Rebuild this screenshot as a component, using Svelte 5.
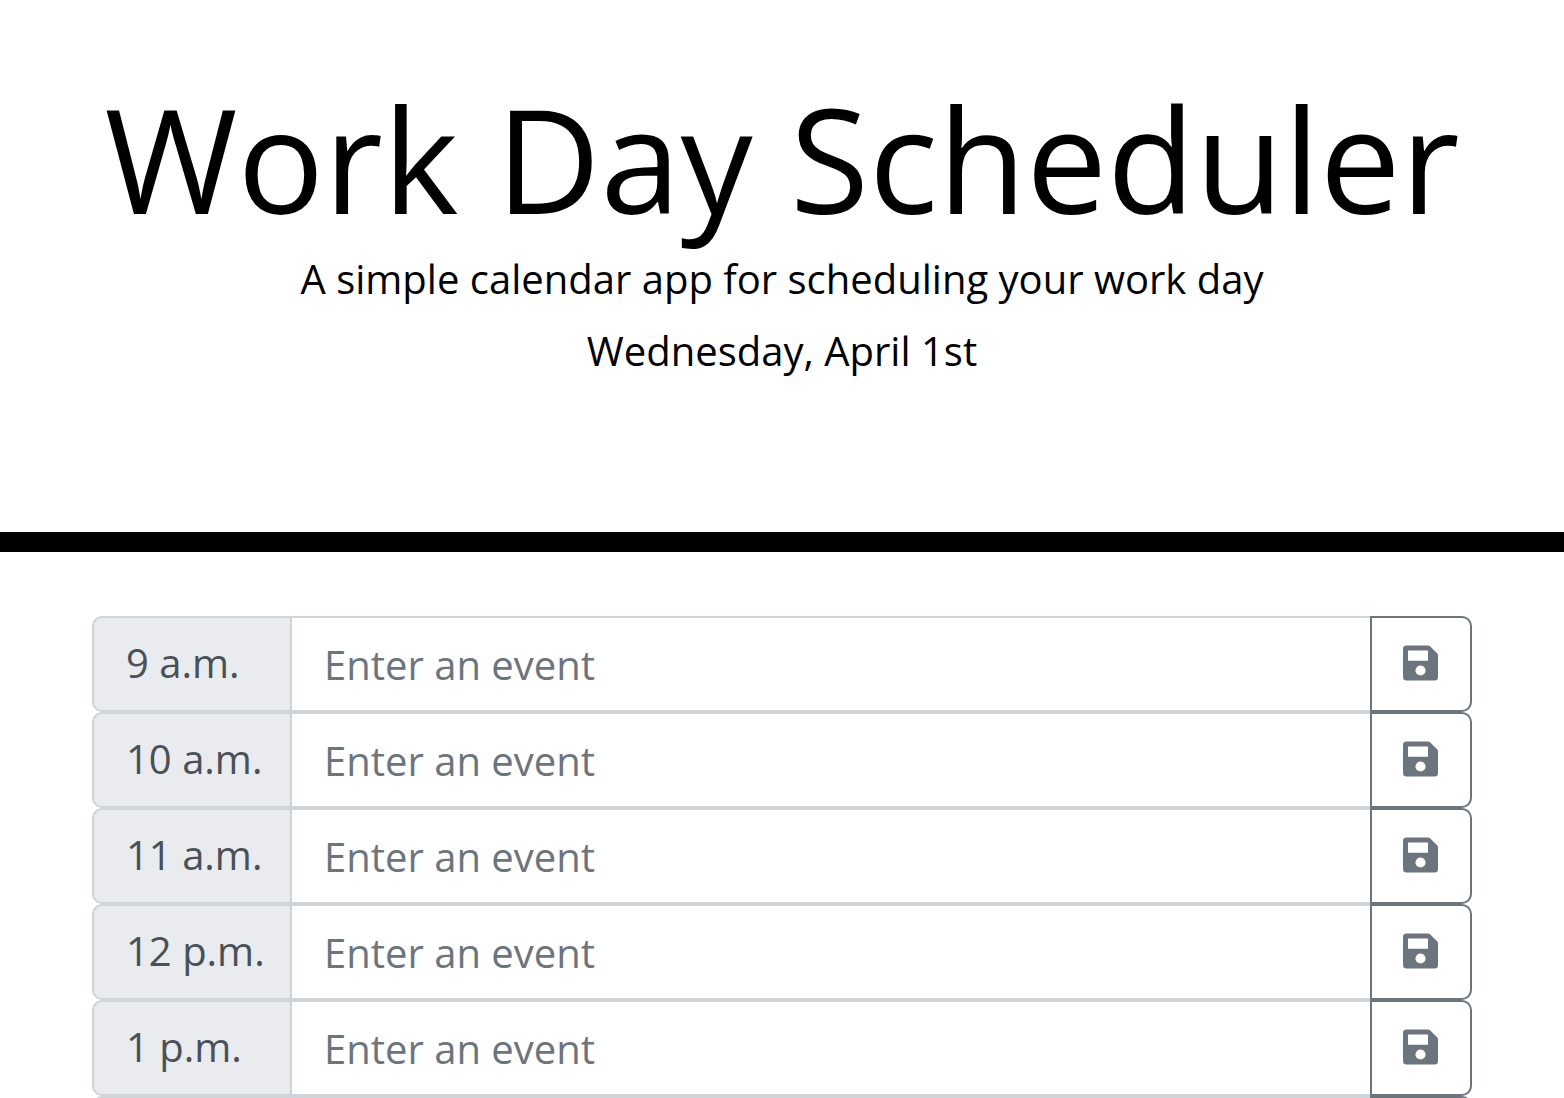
<script>
  const hours = ['9 a.m.', '10 a.m.', '11 a.m.', '12 p.m.', '1 p.m.', '2 p.m.'];
  let events = $state(hours.map(() => ''));
</script>

<header>
  <h1>Work Day Scheduler</h1>
  <p>A simple calendar app for scheduling your work day</p>
  <p>Wednesday, April 1st</p>
</header>

<main>
  {#each hours as hour, i}
    <form class="row" onsubmit={(e) => e.preventDefault()}>
      <label for={`event-${i}`}>{hour}</label>
      <input id={`event-${i}`} type="text" placeholder="Enter an event" bind:value={events[i]} />
      <button type="submit" aria-label={`Save ${hour}`}>
        <svg viewBox="0 0 35 35" aria-hidden="true">
          <path
            fill-rule="evenodd"
            d="M3.500 0H25.200Q26.400 0 27.300 .9L34.100 7.700Q35 8.600 35 9.800V31.500A3.500 3.500 0 0 1 31.500 35H3.500A3.500 3.500 0 0 1 0 31.500V3.500A3.500 3.500 0 0 1 3.500 0ZM5.500 5H24.500Q25 5 25 5.500V14.800Q25 15.300 24.500 15.300H5.500Q5 15.300 5 14.800V5.500Q5 5 5.500 5ZM17.500 19.900A5.100 5.100 0 1 0 17.500 30.100A5.100 5.100 0 1 0 17.500 19.900Z"
          />
        </svg>
      </button>
    </form>
  {/each}
</main>

<style>
  :global(html) {
    overflow: hidden auto;
    scrollbar-width: none;
  }

  :global(body) {
    margin: 0;
    background: #fff;
    color: #000;
    font-family: 'Open Sans', 'Noto Sans', sans-serif;
    font-size: 40px;
    line-height: 60px;
  }

  header {
    padding: 68px 32px 139px;
    border-bottom: 20px solid #000;
    text-align: center;
  }

  h1 {
    margin: 0 0 1px;
    font-size: 144px;
    font-weight: 400;
    line-height: 180px;
  }

  p {
    margin: 0 0 12px;
  }

  main {
    padding: 64px 92px;
  }

  .row {
    display: flex;
    height: 96px;
  }

  label,
  input,
  button {
    box-sizing: border-box;
    border: 2px solid #ced4da;
    font: inherit;
  }

  label {
    width: 200px;
    padding: 15px 32px;
    border-radius: 10px 0 0 10px;
    background: #e9ebef;
    color: #495057;
    white-space: nowrap;
  }

  input {
    flex: 1;
    min-width: 0;
    margin: 0 -2px;
    padding: 2px 32px 0;
    border-radius: 0;
    background: #fff;
    color: #495057;
  }

  input::placeholder {
    color: #6c757d;
    opacity: 1;
  }

  button {
    z-index: 1;
    display: flex;
    align-items: flex-start;
    width: 102px;
    padding: 27px 31px;
    border-color: #6c757d;
    border-radius: 0 10px 10px 0;
    background: #fff;
    color: #6c757d;
  }

  svg {
    width: 35px;
    height: 36px;
    fill: currentColor;
  }
</style>
